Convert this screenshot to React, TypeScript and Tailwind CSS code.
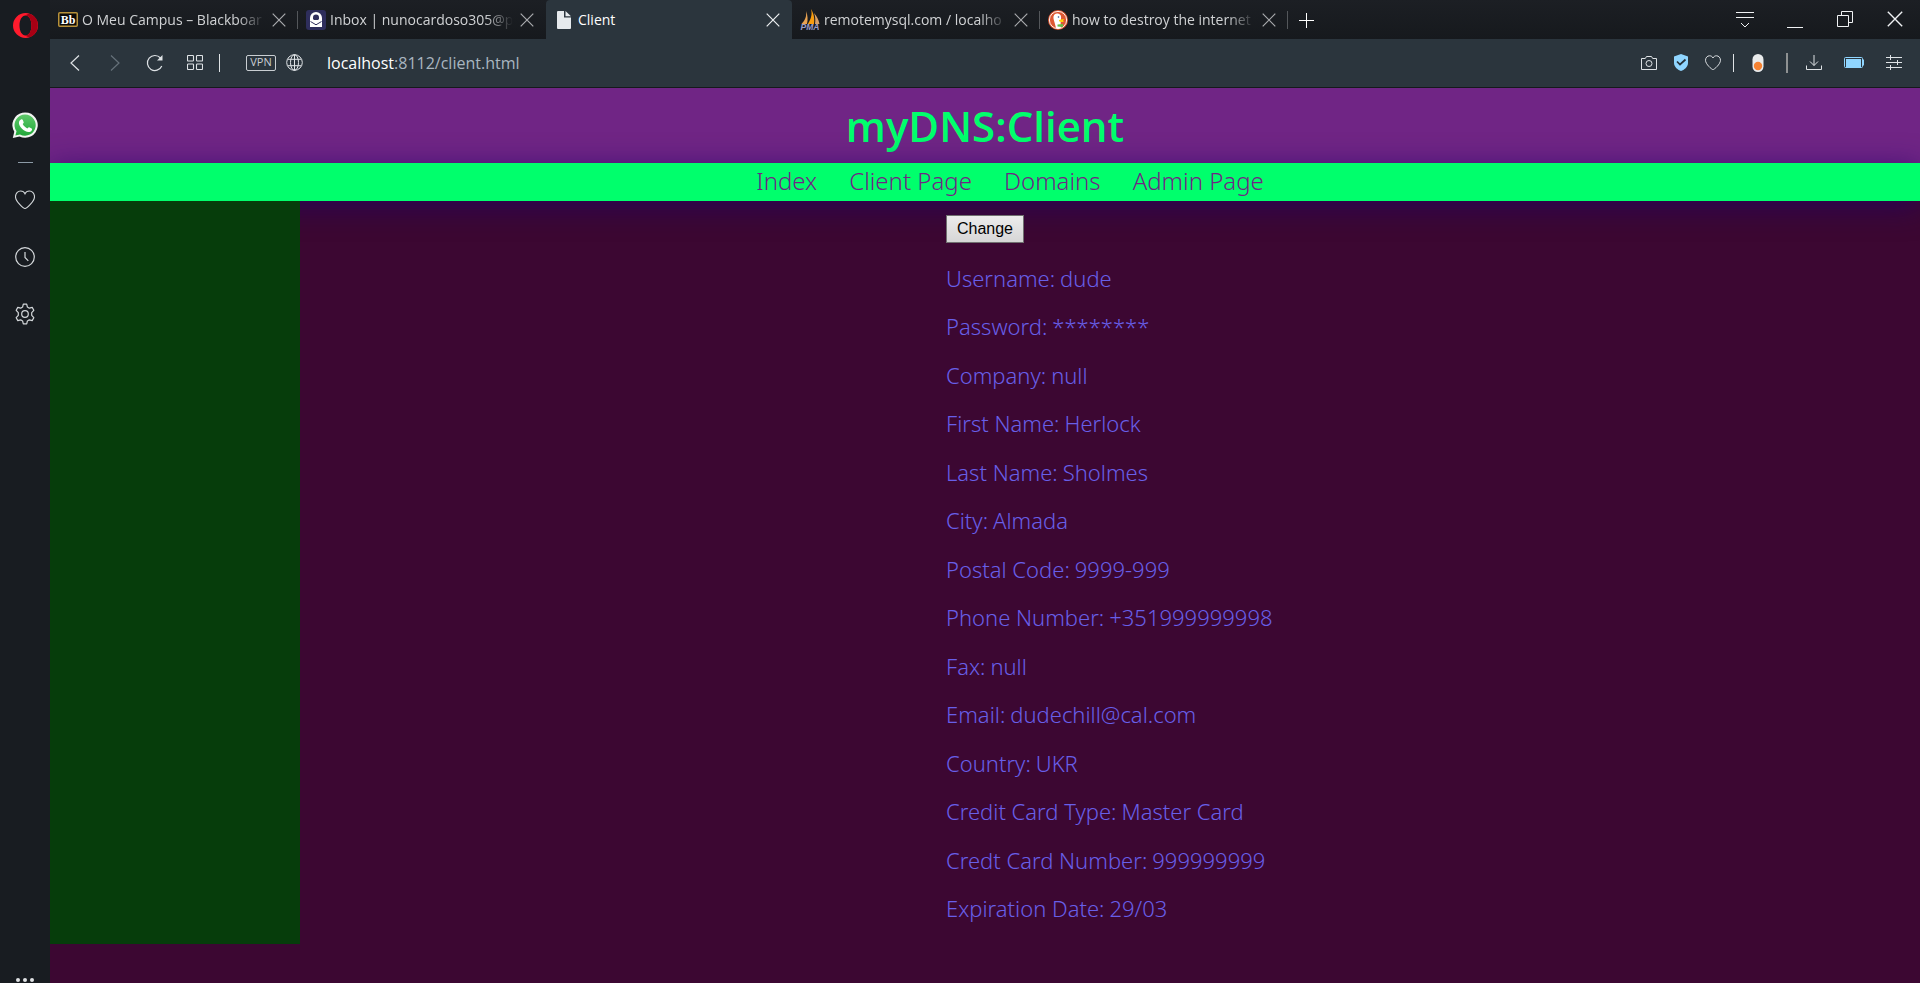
import type { ReactNode } from "react";

const profile: [string, string][] = [
  ["Username", "dude"],
  ["Password", "********"],
  ["Company", "null"],
  ["First Name", "Herlock"],
  ["Last Name", "Sholmes"],
  ["City", "Almada"],
  ["Postal Code", "9999-999"],
  ["Phone Number", "+351999999998"],
  ["Fax", "null"],
  ["Email", "dudechill@cal.com"],
  ["Country", "UKR"],
  ["Credit Card Type", "Master Card"],
  ["Credt Card Number", "999999999"],
  ["Expiration Date", "29/03"],
];

const links = ["Index", "Client Page", "Domains", "Admin Page"];

const HEART = "M10 18.5 C8.5 18.5 0.5 11.5 0.5 6.7 C0.5 3.5 2.8 1 5.6 1 C7.6 1 9.2 2 10 3.8 C10.8 2 12.4 1 14.4 1 C17.2 1 19.5 3.5 19.5 6.7 C19.5 11.5 11.5 18.5 10 18.5 Z";

function CloseIcon({ size = 14 }: { size?: number }) {
  return (
    <svg width={size} height={size} viewBox="0 0 14 14" fill="none" stroke="currentColor" strokeWidth="1.2">
      <path d="M.7 .7 13.3 13.3M13.3 .7 .7 13.3" />
    </svg>
  );
}

function BlackboardIcon() {
  return (
    <svg width="20" height="15" viewBox="0 0 20 15">
      <rect x=".75" y=".75" width="18.5" height="13.5" rx="1" fill="#0c0a08" stroke="#b8923a" strokeWidth="1.5" />
      <text x="10" y="11.5" textAnchor="middle" style={{ fontFamily: "'Liberation Serif', serif" }} fontWeight="700" fontSize="12" fill="#fff">Bb</text>
    </svg>
  );
}

function ProtonIcon() {
  return (
    <svg width="20" height="20" viewBox="0 0 20 20">
      <rect width="20" height="20" rx="3" fill="#2e2e5c" />
      <path d="M4 17V8a6 6 0 0 1 12 0v9H4Z" fill="#fff" />
      <path d="M7 9V7.500a3 3 0 0 1 6 0V9l-1 1H8Z" fill="#2e2e5c" />
      <path d="M4.500 11.500 10 14.800l5.500-3.300" fill="none" stroke="#2e2e5c" strokeWidth="1" />
    </svg>
  );
}

function PageIcon() {
  return (
    <svg width="14" height="18" viewBox="0 0 14 18" fill="#e6eaed">
      <path d="M1 0h6v6.500h7V17a1 1 0 0 1-1 1H1a1 1 0 0 1-1-1V1a1 1 0 0 1 1-1ZM8.500 0 14 5.300H8.500Z" />
    </svg>
  );
}

function PmaIcon() {
  return (
    <svg width="20" height="21" viewBox="0 0 20 21">
      <path d="M6 2C6.800 8 5 11 1.500 15H7C8 11 7.800 6 6 2Z" fill="#e8a252" />
      <path d="M11 0C12.500 5 11 10 7.800 15H14C15 9 13.500 4 11 0Z" fill="#f89c0e" />
      <path d="M14 4C15.500 8 15.500 11 15 15H19.500C18.500 10 16.500 7 14 4Z" fill="#d9a066" />
      <text x="10" y="20.500" textAnchor="middle" fontFamily="Liberation Sans, sans-serif" fontWeight="700" fontStyle="italic" fontSize="8.500" fill="#9a9cc8">PMA</text>
    </svg>
  );
}

function DuckIcon() {
  return (
    <svg width="20" height="20" viewBox="0 0 20 20">
      <circle cx="10" cy="10" r="10" fill="#de5833" />
      <circle cx="10" cy="10" r="8.600" fill="none" stroke="#fff" strokeWidth=".9" />
      <path d="M8 18C7 13 5 9 5.500 6.500C6 4 8 3 10 3.500C12.500 4 13.500 6 13 9C12.500 12 12.500 15 13 17.800C11 18.600 9.500 18.500 8 18Z" fill="#fff" />
      <circle cx="10.500" cy="7" r=".8" fill="#2d4f8e" />
      <path d="M11 10C13 9 15 9 16.500 9.300C15 10.500 14.500 11 16 12C14 12.300 12 12 11 11.300Z" fill="#fdd20a" />
      <path d="M9.500 14.500 15 14V17L9.500 16.500Z" fill="#65bc46" />
    </svg>
  );
}

function Tab({ icon, title, active = false, divider = false }: { icon: ReactNode; title: string; active?: boolean; divider?: boolean }) {
  return (
    <div className={active
      ? "flex h-full w-[246px] shrink-0 items-center rounded-t bg-[#2b353d] pl-2 text-white"
      : "flex h-full w-[248px] shrink-0 items-center pl-2 text-[#d0d2d4]"}>
      <span className="flex w-5 shrink-0 justify-center">{icon}</span>
      <span className={active
        ? "ml-1 min-w-0 flex-1 overflow-hidden whitespace-nowrap"
        : "ml-1 min-w-0 flex-1 overflow-hidden whitespace-nowrap [mask-image:linear-gradient(to_right,#000_85%,transparent)]"}>{title}</span>
      <button aria-label={`Close ${title}`} className={active ? "flex w-7 shrink-0 justify-center text-[#eef0f2]" : "flex w-7 shrink-0 justify-center text-[#a9abae]"}>
        <CloseIcon />
      </button>
      <span className={divider ? "ml-1 h-[18px] w-px bg-[#54575b]" : "ml-1 h-[18px] w-px"} />
    </div>
  );
}

function Tool({ label, wide = false, children }: { label: string; wide?: boolean; children: ReactNode }) {
  return (
    <button aria-label={label} className={wide ? "flex h-8 w-10 shrink-0 items-center justify-center" : "flex h-8 w-8 shrink-0 items-center justify-center"}>
      {children}
    </button>
  );
}

function SideButton({ label, children }: { label: string; children: ReactNode }) {
  return (
    <button aria-label={label} className="flex h-[57px] w-full items-center justify-center text-[#d3d7da]">
      {children}
    </button>
  );
}

function Sidebar() {
  return (
    <aside className="flex w-[50px] shrink-0 flex-col items-center bg-[#181c21]">
      <button aria-label="Opera menu" className="flex h-[50px] w-full items-center justify-center">
        <svg width="25" height="25" viewBox="0 0 25 25">
          <path fillRule="evenodd" d="M12.500 0a12.500 12.500 0 0 1 0 25 12.500 12.500 0 0 1 0-25ZM12.500 2.500C9 2.500 6.500 6.800 6.500 12.500S9 22.500 12.500 22.500 18.500 18.200 18.500 12.500 16 2.500 12.500 2.500Z" fill="#ff1b2d" />
          <path d="M12.500 2.500C14 1.200 16 .8 17.500 1.100A12.500 12.500 0 0 1 17.500 23.900C16 24.200 14 23.800 12.500 22.500 16 22.500 18.500 18.200 18.500 12.500S16 2.500 12.500 2.500Z" fill="#a70014" />
        </svg>
      </button>
      <button aria-label="WhatsApp" className="mt-[50px] flex h-[50px] w-full items-center justify-center">
        <svg width="27" height="27" viewBox="0 0 27 27">
          <defs>
            <linearGradient id="wa" x1="0" y1="0" x2="0" y2="1">
              <stop offset="0" stopColor="#5fc96b" />
              <stop offset="1" stopColor="#22a83a" />
            </linearGradient>
          </defs>
          <path d="M.8 26 2.300 19.800A12.700 12.700 0 1 1 7.500 24.500Z" fill="#f2f4f2" />
          <path d="M3.400 23.400 4.500 19.300A10.600 10.600 0 1 1 8 22.400Z" fill="url(#wa)" />
          <path d="M9 7.500C9.800 7 10.500 7.300 10.800 8L11.700 10.200C11.900 10.900 11 11.700 10.700 12.100C11.800 14.200 13.300 15.500 15.300 16.400C15.800 16 16.400 14.900 17.200 15.200L19.700 16.500C20.700 17.200 19.600 19.300 18.200 19.800C15.500 20.600 12 18.800 10 16.700C7.800 14.500 6.500 12 7 10C7.300 8.800 8 8 9 7.500Z" fill="#fff" />
        </svg>
      </button>
      <span className="mt-3 h-px w-[15px] bg-[#8c9aa6]" />
      <div className="mt-2 w-full">
        <SideButton label="Favourites">
          <svg width="20" height="19" viewBox="0 0 20 19" fill="none" stroke="currentColor" strokeWidth="1.1">
            <path d={HEART} />
          </svg>
        </SideButton>
        <SideButton label="History">
          <svg width="20" height="20" viewBox="0 0 20 20" fill="none" stroke="currentColor" strokeWidth="1.200">
            <circle cx="10" cy="10" r="9.300" />
            <path d="M10 5v5.500l3.300 3.300" />
          </svg>
        </SideButton>
        <SideButton label="Settings">
          <svg width="20" height="22" viewBox="0 0 20 22" fill="none" stroke="currentColor" strokeWidth="1.200" strokeLinejoin="round">
            <path d="M8.300 1.200H11.700L12.400 4.100 14.300 5.200 17.200 4.400 18.800 7.300 16.700 9.700V12.300L18.800 14.700 17.200 17.600 14.300 16.800 12.400 17.900 11.700 20.800H8.300L7.600 17.900 5.700 16.800 2.800 17.600 1.200 14.700 3.300 12.300V9.700L1.200 7.300 2.800 4.400 5.700 5.200 7.600 4.100Z" />
            <circle cx="10" cy="11" r="3.300" />
          </svg>
        </SideButton>
      </div>
      <button aria-label="More" className="mt-auto flex h-[5px] items-start gap-[3px] text-[#e0e2e4]">
        <span className="size-1 rounded-full bg-current" />
        <span className="size-1 rounded-full bg-current" />
        <span className="size-1 rounded-full bg-current" />
      </button>
    </aside>
  );
}

function TabBar() {
  return (
    <div className="flex h-[39px] items-center bg-linear-to-b from-[#1c1f24] to-[#16191d] text-sm">
      <Tab icon={<BlackboardIcon />} title="O Meu Campus – Blackboar" divider />
      <Tab icon={<ProtonIcon />} title="Inbox | nunocardoso305@p" />
      <Tab icon={<PageIcon />} title="Client" active />
      <Tab icon={<PmaIcon />} title="remotemysql.com / localho" divider />
      <Tab icon={<DuckIcon />} title="how to destroy the internet" divider />
      <button aria-label="New tab" className="ml-2 flex w-5 justify-center text-white">
        <svg width="16" height="16" viewBox="0 0 16 16" stroke="currentColor" fill="none"><path d="M8.500 1v15M1 8.500h15" /></svg>
      </button>
      <div className="ml-auto flex text-[#f0f2f4]">
        <button aria-label="Tab menu" className="flex w-[50px] justify-center">
          <svg width="18" height="18" viewBox="0 0 18 18" stroke="currentColor" fill="none"><path d="M0 1.500h18M0 6.500h18M5 12l4 4 4-4" /></svg>
        </button>
        <button aria-label="Minimize" className="flex w-[50px] justify-center">
          <svg width="16" height="18" viewBox="0 0 16 18" stroke="currentColor" fill="none"><path d="M0 16.500h16" /></svg>
        </button>
        <button aria-label="Restore" className="flex w-[50px] justify-center">
          <svg width="16" height="16" viewBox="0 0 16 16" stroke="currentColor" fill="none"><path d="M.5 4.500h11v11H.5ZM4.500 4.500v-4h11v11h-4" /></svg>
        </button>
        <button aria-label="Close window" className="flex w-[50px] justify-center">
          <CloseIcon size={16} />
        </button>
      </div>
    </div>
  );
}

function AddressBar() {
  return (
    <div className="flex h-[49px] items-center border-b border-[#15191c] bg-[#2b353d] pb-px pl-[5px] pr-[6px] text-[#dfe3e6]">
      <Tool label="Back" wide>
        <svg width="10" height="16" viewBox="0 0 10 16" stroke="currentColor" strokeWidth="1.200" fill="none"><path d="M9 .5 1 8l8 7.500" /></svg>
      </Tool>
      <Tool label="Forward" wide>
        <svg width="10" height="16" viewBox="0 0 10 16" stroke="#66717a" strokeWidth="1.200" fill="none"><path d="M1 .5 9 8l-8 7.500" /></svg>
      </Tool>
      <Tool label="Reload" wide>
        <svg width="18" height="18" viewBox="0 0 18 18" fill="none" stroke="currentColor" strokeWidth="1.200">
          <path d="M14.500 4A7.500 7.500 0 1 0 15.800 12" />
          <path d="M16.500 1v5.500H11Z" fill="currentColor" stroke="none" />
        </svg>
      </Tool>
      <Tool label="Start page" wide>
        <svg width="16" height="15" viewBox="0 0 16 15" fill="none" stroke="currentColor" strokeWidth="1.100">
          <rect x=".5" y=".5" width="6" height="5.500" rx=".8" /><rect x="9.500" y=".5" width="6" height="5.500" rx=".8" />
          <rect x=".5" y="9" width="6" height="5.500" rx=".8" /><rect x="9.500" y="9" width="6" height="5.500" rx=".8" />
        </svg>
      </Tool>
      <span className="ml-1 h-[18px] w-px bg-[#dfe3e6]" />
      <button className="ml-[26px] flex h-4 w-[30px] items-center justify-center rounded-xs border border-[#c9ced2] text-[11px] text-[#c9ced2]">VPN</button>
      <button aria-label="Site information" className="ml-[10px]">
        <svg width="17" height="17" viewBox="0 0 17 17" fill="none" stroke="currentColor" strokeWidth="1">
          <circle cx="8.500" cy="8.500" r="7.800" /><ellipse cx="8.500" cy="8.500" rx="4" ry="7.800" />
          <path d="M8.500.7v15.600M1.600 5.300h13.800M1.600 11.700h13.800" />
        </svg>
      </button>
      <a href="#address" className="ml-6 min-w-0 flex-1 truncate text-base text-[#a9b6c0]"><span className="text-white">localhost</span>:8112/client.html</a>
      <Tool label="Snapshot">
        <svg width="16" height="14" viewBox="0 0 16 14" fill="none" stroke="currentColor">
          <path d="M.5 2.500h3.800l1.200-2h5l1.200 2h3.800v11H.5Z" /><circle cx="8" cy="7.500" r="3" />
        </svg>
      </Tool>
      <Tool label="Ad blocker">
        <svg width="14" height="17" viewBox="0 0 14 17">
          <path d="M7 0 14 2.500V9C14 13 10 16 7 17 4 16 0 13 0 9V2.500Z" fill="#8fd5ff" />
          <path d="M3 7.500 6 10.500 11.500 5.500" fill="none" stroke="#253038" strokeWidth="1.700" />
        </svg>
      </Tool>
      <Tool label="Bookmark">
        <svg width="16" height="15" viewBox="0 0 20 19" fill="none" stroke="currentColor" strokeWidth="1.250"><path d={HEART} /></svg>
      </Tool>
      <span className="mx-1 h-[18px] w-px bg-[#dfe3e6]" />
      <Tool label="Extension" wide>
        <svg width="14" height="20" viewBox="0 0 14 20">
          <rect x="1.500" y="1" width="11" height="18" rx="5.500" fill="#e9ebec" /><circle cx="7" cy="13" r="4.200" fill="#f58232" />
        </svg>
      </Tool>
      <span className="ml-2 mr-[6px] h-5 w-0.5 bg-[#8e9192]" />
      <Tool label="Downloads" wide>
        <svg width="16" height="15" viewBox="0 0 16 15" fill="none" stroke="currentColor"><path d="M8 0v10.500M4 6.500l4 4 4-4M.5 10.500v4h15v-4" /></svg>
      </Tool>
      <Tool label="Battery saver" wide>
        <svg width="20" height="11" viewBox="0 0 20 11">
          <rect x=".5" y=".5" width="18" height="10" rx="1" fill="none" stroke="#8fd5ff" /><rect x="2" y="2" width="15" height="8.500" fill="#8fd5ff" /><rect x="18.500" y="2.500" width="1.500" height="6" fill="#8fd5ff" />
        </svg>
      </Tool>
      <Tool label="Easy setup" wide>
        <svg width="16" height="15" viewBox="0 0 16 15" fill="none" stroke="currentColor"><path d="M0 2.500h16M0 7.500h16M0 12.500h16M4.500 0v5M11.500 5v5M4.500 10v5" /></svg>
      </Tool>
    </div>
  );
}

function ClientPage() {
  return (
    <div className="flex-1 overflow-hidden bg-[#3c0732] font-['Noto_Sans','Open_Sans',sans-serif]">
      <header className="flex h-[75px] items-center justify-center bg-[#702585]">
        <h1 className="font-['Open_Sans',sans-serif] text-[42px] leading-none font-semibold text-[#00ff6c]">myDNS:Client</h1>
      </header>
      <nav className="relative flex h-[38px] items-center justify-center gap-8 bg-[#00ff6c] pb-0.5 pl-[50px] text-2xl font-light text-[#702585] shadow-[0_5px_30px_#1e0068b0]">
        {links.map((link) => (
          <a key={link} href={`#${link.toLowerCase().replace(" ", "-")}`}>{link}</a>
        ))}
      </nav>
      <div className="grid min-h-[743px] grid-cols-[250px_1fr_250px]">
        <aside className="relative bg-[#063d0b]" />
        <main className="relative mx-auto w-[78px] pt-[14px] whitespace-nowrap">
          <button className="h-7 w-full border border-[#707070] bg-linear-to-b from-[#ececec] to-[#d6d6d6] pb-px font-['Liberation_Sans',Arial,sans-serif] text-base leading-none text-black">Change</button>
          <dl className="mt-[11px] grid h-[679px] auto-rows-fr text-[22px] font-light text-[#685fe8]">
            {profile.map(([label, value]) => (
              <div key={label} className="flex items-center gap-[5px]">
                <dt>{label}:</dt>
                <dd>{value}</dd>
              </div>
            ))}
          </dl>
        </main>
      </div>
    </div>
  );
}

export default function App() {
  return (
    <div className="flex min-h-screen overflow-hidden font-['Open_Sans','Noto_Sans',sans-serif]">
      <Sidebar />
      <div className="flex min-w-0 flex-1 flex-col">
        <TabBar />
        <AddressBar />
        <ClientPage />
      </div>
    </div>
  );
}
